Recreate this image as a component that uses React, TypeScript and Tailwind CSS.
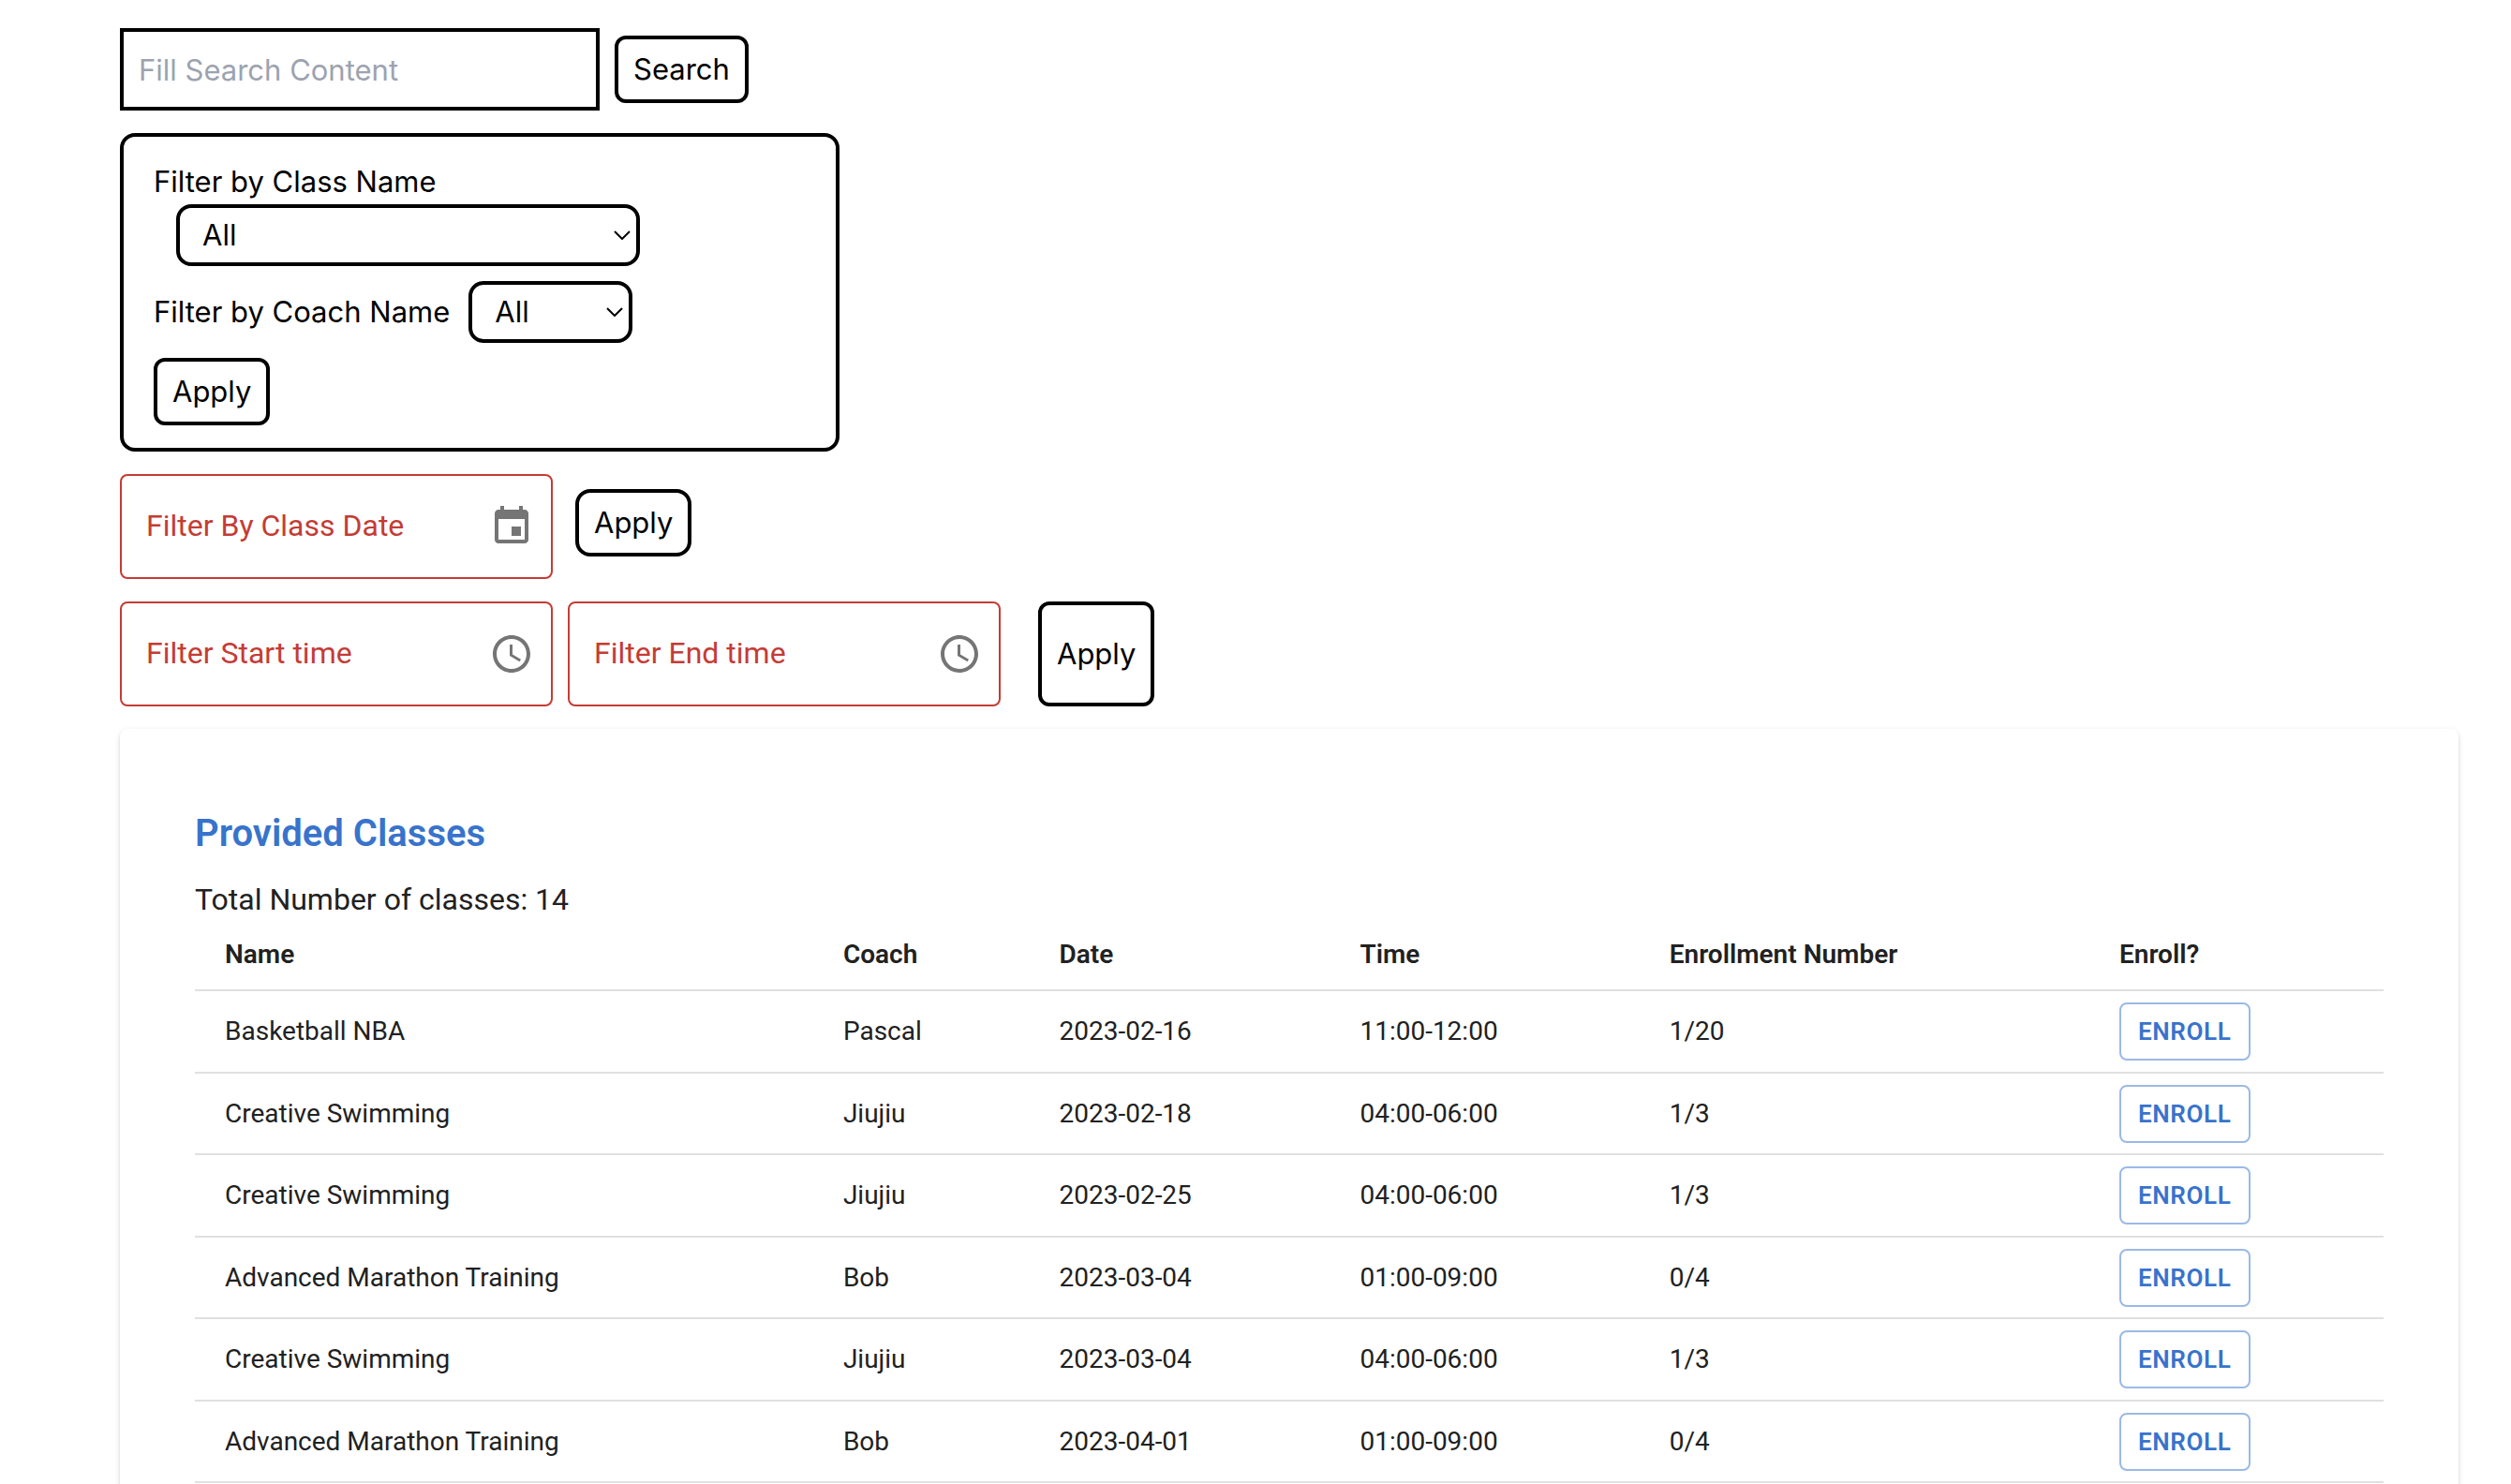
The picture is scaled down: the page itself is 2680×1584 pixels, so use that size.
import type { ReactNode } from "react";

type ClassRow = {
  name: string;
  coach: string;
  date: string;
  time: string;
  enrolled: string;
};

const classes: ClassRow[] = [
  { name: "Basketball NBA", coach: "Pascal", date: "2023-02-16", time: "11:00-12:00", enrolled: "1/20" },
  { name: "Creative Swimming", coach: "Jiujiu", date: "2023-02-18", time: "04:00-06:00", enrolled: "1/3" },
  { name: "Creative Swimming", coach: "Jiujiu", date: "2023-02-25", time: "04:00-06:00", enrolled: "1/3" },
  { name: "Advanced Marathon Training", coach: "Bob", date: "2023-03-04", time: "01:00-09:00", enrolled: "0/4" },
  { name: "Creative Swimming", coach: "Jiujiu", date: "2023-03-04", time: "04:00-06:00", enrolled: "1/3" },
  { name: "Advanced Marathon Training", coach: "Bob", date: "2023-04-01", time: "01:00-09:00", enrolled: "0/4" },
];

const columns = [
  { title: "Name", width: "w-[28.25%]" },
  { title: "Coach", width: "w-[9.87%]" },
  { title: "Date", width: "w-[13.74%]" },
  { title: "Time", width: "w-[14.14%]" },
  { title: "Enrollment Number", width: "w-[20.56%]" },
  { title: "Enroll?", width: "w-[13.44%]" },
];

function OutlineButton({ children, shape }: { children: ReactNode; shape: string }) {
  return (
    <button type="button" className={`border-4 border-black px-4 text-[31px] leading-12 ${shape}`}>
      {children}
    </button>
  );
}

function FilterSelect({ id, width }: { id: string; width: string }) {
  return (
    <div className={`relative ${width}`}>
      <select
        id={id}
        defaultValue="All"
        className="block h-[66px] w-full appearance-none rounded-2xl border-4 border-black bg-white pr-10 pl-6 text-[31px] leading-12"
      >
        <option>All</option>
      </select>
      <svg
        viewBox="0 0 18 10"
        className="pointer-events-none absolute top-7 right-2.5 h-2.5 w-[18px]"
        fill="none"
        stroke="black"
        strokeWidth="2"
        aria-hidden="true"
      >
        <path d="M1 1l8 8 8-8" />
      </svg>
    </div>
  );
}

function CalendarIcon() {
  return (
    <svg viewBox="0 0 24 24" className="size-12" fill="currentColor" aria-hidden="true">
      <path d="M17 12h-5v5h5v-5zM16 1v2H8V1H6v2H5c-1.11 0-1.99.9-1.99 2L3 19c0 1.1.89 2 2 2h14c1.1 0 2-.9 2-2V5c0-1.1-.9-2-2-2h-1V1h-2zm3 18H5V8h14v11z" />
    </svg>
  );
}

function ClockIcon() {
  return (
    <svg viewBox="0 0 24 24" className="size-12" fill="currentColor" aria-hidden="true">
      <path d="M11.99 2C6.47 2 2 6.48 2 12s4.47 10 9.99 10C17.52 22 22 17.52 22 12S17.52 2 11.99 2zM12 20c-4.42 0-8-3.58-8-8s3.58-8 8-8 8 3.58 8 8-3.58 8-8 8z" />
      <path d="M12.5 7H11v6l5.25 3.15.75-1.23-4.5-2.67z" />
    </svg>
  );
}

function PickerField({ label, action, icon }: { label: string; action: string; icon: ReactNode }) {
  return (
    <div className="flex h-28 w-[462px] items-center rounded-lg border-2 border-[#c43c35] pr-[18px] pl-[26px] font-[Roboto,sans-serif]">
      <input
        type="text"
        aria-label={label}
        placeholder={label}
        className="h-full min-w-0 flex-1 bg-transparent pb-0.5 text-[32px] text-[#c43c35] outline-none placeholder:text-[#c43c35]"
      />
      <button type="button" aria-label={action} className="text-[#757575]">
        {icon}
      </button>
    </div>
  );
}

export default function App() {
  return (
    <main className="flex h-screen flex-col items-start gap-6 overflow-y-auto bg-white pt-[30px] pr-14 pl-32 font-[Inter,sans-serif] text-[31px] leading-12 text-black [scrollbar-width:none]">
      <form className="flex items-center gap-4">
        <input
          type="text"
          aria-label="Search content"
          placeholder="Fill Search Content"
          className="h-[88px] w-lg border-4 border-black px-4 placeholder:text-[#9ca3af]"
        />
        <OutlineButton shape="h-[72px] rounded-xl">Search</OutlineButton>
      </form>

      <form className="flex w-3xl flex-col items-start gap-4 rounded-2xl border-4 border-black px-8 py-6">
        <div>
          <label htmlFor="class-name" className="block">
            Filter by Class Name
          </label>
          <div className="pl-6">
            <FilterSelect id="class-name" width="w-[495px]" />
          </div>
        </div>
        <div className="flex items-center gap-5">
          <label htmlFor="coach-name">Filter by Coach Name</label>
          <FilterSelect id="coach-name" width="w-[175px]" />
        </div>
        <OutlineButton shape="h-[72px] rounded-xl">Apply</OutlineButton>
      </form>

      <form className="flex gap-6">
        <PickerField label="Filter By Class Date" action="Choose date" icon={<CalendarIcon />} />
        <OutlineButton shape="mt-4 h-[72px] rounded-2xl">Apply</OutlineButton>
      </form>

      <form className="flex">
        <PickerField label="Filter Start time" action="Choose start time" icon={<ClockIcon />} />
        <div className="mr-10 ml-4">
          <PickerField label="Filter End time" action="Choose end time" icon={<ClockIcon />} />
        </div>
        <OutlineButton shape="rounded-xl">Apply</OutlineButton>
      </form>

      <section className="w-full rounded-lg bg-white p-20 font-[Roboto,sans-serif] text-[#212121] shadow-[0_4px_2px_-2px_rgba(0,0,0,0.2),0_2px_2px_0_rgba(0,0,0,0.14),0_2px_6px_0_rgba(0,0,0,0.12)]">
        <h2 className="mb-3.5 text-[40px] leading-16 font-semibold text-[#3873cc]">Provided Classes</h2>
        <p className="text-[32px] leading-12">Total Number of classes: 14</p>
        <table className="w-full table-fixed text-left text-[28px]">
          <thead>
            <tr className="h-[73px] border-b-2 border-[#e0e0e0]">
              {columns.map((column) => (
                <th key={column.title} scope="col" className={`px-8 pb-0.5 font-semibold ${column.width}`}>
                  {column.title}
                </th>
              ))}
            </tr>
          </thead>
          <tbody>
            {classes.map((row) => (
              <tr key={row.date + row.name} className="border-b-2 border-[#e0e0e0] odd:h-[88px] even:h-[87px]">
                <td className="px-8">{row.name}</td>
                <td className="px-8">{row.coach}</td>
                <td className="px-8">{row.date}</td>
                <td className="px-8">{row.time}</td>
                <td className="px-8">{row.enrolled}</td>
                <td className="px-8">
                  <button
                    type="button"
                    className="block h-[62px] rounded-lg border-2 border-[#9bb9e6] px-[18px] text-[26px] font-semibold tracking-wide text-[#3873cc] uppercase"
                  >
                    Enroll
                  </button>
                </td>
              </tr>
            ))}
          </tbody>
        </table>
      </section>
    </main>
  );
}
